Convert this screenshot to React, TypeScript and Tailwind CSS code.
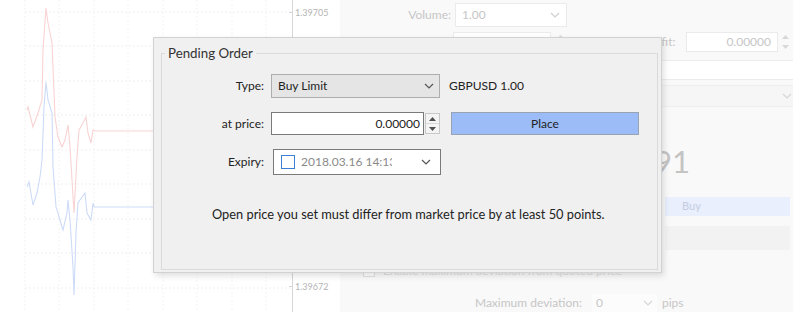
import React from "react";

const FONT = { fontFamily: "Lato, 'Liberation Sans', sans-serif" };

const RED = "27,110 28,107 33,127 38,113 42,100 43,50 46,8 48,23 52,43 55,117 58,137 62,147 65,140 68,125 70,147 74,213 77,157 79,130 83,123 86,117 88,133 91,143 93,130 95,131 292,131";
const BLUE = "27,187 29,182 33,205 37,193 40,177 42,160 44,107 46,82 48,100 52,113 53,167 56,207 58,213 62,227 63,230 67,213 68,200 70,220 73,267 74,295 76,233 78,203 82,197 85,193 87,213 91,220 93,203 94,207 292,207";

const H_LINES = [12, 46, 81, 115, 150, 184, 219, 253, 288];
const V_LINES = [25, 59, 94, 128, 163, 197, 232, 266];

function Chevron({ className = "" }: { className?: string }) {
  return (
    <svg width="10" height="6" viewBox="0 0 10 6" className={className}>
      <polyline points="1,1 5,5 9,1" fill="none" stroke="currentColor" strokeWidth="1.2" />
    </svg>
  );
}

function Spinner({ faint = false }: { faint?: boolean }) {
  const c = faint ? "#d8d8d8" : "#505050";
  return (
    <div className={`flex flex-col w-[15px] h-full ${faint ? "" : "border border-[#c8c8c8] bg-[#f4f4f4]"}`}>
      <div className="flex-1 flex items-center justify-center">
        <svg width="7" height="4" viewBox="0 0 7 4"><polygon points="0,4 3.5,0 7,4" fill={c} /></svg>
      </div>
      <div className={`flex-1 flex items-center justify-center ${faint ? "" : "border-t border-[#d8d8d8]"}`}>
        <svg width="7" height="4" viewBox="0 0 7 4"><polygon points="0,0 3.5,4 7,0" fill={c} /></svg>
      </div>
    </div>
  );
}

function Chart() {
  return (
    <svg width="292" height="312" className="shrink-0">
      {H_LINES.map((y) => (
        <line key={"h" + y} x1="25" x2="292" y1={y} y2={y} stroke="#efefef" strokeDasharray="2 2" />
      ))}
      {V_LINES.map((x) => (
        <line key={"v" + x} x1={x} x2={x} y1="0" y2="312" stroke="#f3f3f3" strokeDasharray="2 2" />
      ))}
      <polyline points={RED} fill="none" stroke="#f9d3d3" strokeWidth="1.1" />
      <polyline points={BLUE} fill="none" stroke="#cddbf8" strokeWidth="1.1" />
    </svg>
  );
}

function PriceAxis() {
  return (
    <div className="w-[48px] shrink-0 border-l border-[#d6d6d6] flex flex-col justify-between pt-[6px] pb-[19px] text-[9px] text-[#b4b4b4]">
      <div className="flex items-center gap-[2px] -ml-[4px]">
        <span className="w-[4px] border-t border-[#d6d6d6]" />
        <span>1.39705</span>
      </div>
      <div className="flex items-center gap-[2px] -ml-[4px]">
        <span className="w-[4px] border-t border-[#d6d6d6]" />
        <span>1.39672</span>
      </div>
    </div>
  );
}

function OrderPanel() {
  const label = "text-[12px] text-[#c6c6c6]";
  const box = "bg-white border border-[#ebebeb]";
  return (
    <div className="w-[453px] shrink-0 bg-[#f9f9f9] flex flex-col text-[#c6c6c6]">
      {/* volume */}
      <div className="flex items-center h-[24px] mt-[3px]">
        <span className={`${label} w-[111px] text-right`}>Volume:</span>
        <div className={`${box} ml-[4px] w-[112px] h-full flex items-center justify-between pl-[6px] pr-[6px] text-[12px]`}>
          <span>1.00</span>
          <Chevron className="text-[#cfcfcf]" />
        </div>
      </div>
      {/* stop loss / take profit */}
      <div className="flex items-center h-[21px] mt-[5px]">
        <span className={`${label} w-[111px] text-right`}>Stop Loss:</span>
        <div className={`${box} ml-[4px] w-[100px] h-full flex items-center justify-end pr-[4px] text-[12px]`}>0.00000</div>
        <div className="ml-[2px] h-full"><Spinner faint /></div>
        <span className={`${label} w-[109px] text-right`}>Take Profit:</span>
        <div className={`${box} ml-[11px] w-[93px] h-full flex items-center justify-end pr-[6px] text-[12px]`}>0.00000</div>
        <div className="h-full"><Spinner faint /></div>
      </div>
      {/* comment */}
      <div className="flex h-[20px] mt-[8px]">
        <span className="w-[115px]" />
        <div className="flex-1 bg-white border-y border-[#ececec]" />
      </div>
      {/* fill policy */}
      <div className="flex h-[23px] mt-[5px]">
        <span className="w-[115px]" />
        <div className="flex-1 bg-[#f6f6f6] border-y border-[#efefef] flex items-center justify-end pr-[1px]">
          <Chevron className="text-[#d6d6d6]" />
        </div>
      </div>
      {/* prices */}
      <div className="flex justify-end pr-[103px] mt-[38px] h-[32px] items-center">
        <span className="text-[31px] leading-none text-[#c4c4c4]">1.39683 / 1.39691</span>
      </div>
      {/* sell / buy */}
      <div className="flex h-[20px] mt-[20px] gap-[10px] pl-[115px] pr-[3px]">
        <div className="flex-1 bg-[#fbe9e9]" />
        <div className="w-[125px] bg-[#e9effc] flex items-center pl-[17px] text-[11px] text-[#c4cde2]">Buy</div>
      </div>
      <div className="flex h-[24px] mt-[10px] pl-[325px] pr-[3px]">
        <div className="flex-1 bg-[#f2f2f2]" />
      </div>
      {/* deviation checkbox */}
      <div className="flex items-center h-[14px] mt-[14px] pl-[23px] gap-[8px]">
        <span className="w-[12px] h-[12px] border border-[#e2e2e2] bg-white" />
        <span className="text-[12px] text-[#e0e0e0]">Enable maximum deviation from quoted price</span>
      </div>
      {/* maximum deviation */}
      <div className="flex items-center h-[18px] mt-[16px]">
        <span className={`${label} w-[242px] text-right`}>Maximum deviation:</span>
        <div className="ml-[10px] w-[65px] h-full flex items-center justify-between pl-[4px] pr-[4px] bg-[#fcfcfc] text-[12px]">
          <span>0</span>
          <Chevron className="text-[#d6d6d6]" />
        </div>
        <span className={`${label} ml-[5px]`}>pips</span>
      </div>
    </div>
  );
}

function PendingOrderDialog() {
  return (
    <div className="absolute left-[153px] top-[37px] w-[509px] h-[236px] bg-[#f0f0f0] border border-[#d2d2d2] shadow-[2px_3px_6px_rgba(0,0,0,0.12)] pl-[7px] pr-[3px] pt-[8px] pb-[2px] text-[12px] text-[#222]">
      <fieldset className="h-full border border-[#dadada] px-0">
        <legend className="ml-[3px] px-[3px] text-[13.3px] text-[#333] leading-[15px]">Pending Order</legend>
        <div className="flex flex-col mt-[13px]">
          {/* Type */}
          <div className="flex items-center h-[24px]">
            <span className="w-[103px] text-right pr-[1px]">Type:</span>
            <div className="ml-[6px] w-[169px] h-full bg-[#e5e5e5] border border-[#adadad] flex items-center justify-between pl-[6px] pr-[5px]">
              <span>Buy Limit</span>
              <Chevron className="text-[#555]" />
            </div>
            <span className="ml-[9px]">GBPUSD 1.00</span>
          </div>
          {/* at price */}
          <div className="flex items-center h-[23px] mt-[14px]">
            <span className="w-[103px] text-right pr-[1px]">at price:</span>
            <div className="ml-[6px] w-[169px] h-full flex">
              <div className="flex-1 bg-white border border-[#7a7a7a] flex items-center justify-end pr-[3px]">0.00000</div>
              <div className="h-full py-[1px] pl-[1px]"><Spinner /></div>
            </div>
            <button className="ml-[11px] w-[188px] h-full bg-[#9bbcf7] border border-[#9aa3b4] text-[#222] flex items-center justify-center">
              Place
            </button>
          </div>
          {/* Expiry */}
          <div className="flex items-center h-[26px] mt-[14px]">
            <span className="w-[103px] text-right pr-[1px]">Expiry:</span>
            <div className="ml-[8px] w-[168px] h-full bg-white border border-[#7a7a7a] flex items-center pl-[7px] pr-[9px]">
              <span className="w-[14px] h-[14px] border-[1.5px] border-[#3c7fd4] shrink-0" />
              <span className="ml-[6px] w-[91px] overflow-hidden whitespace-nowrap text-[#8a8a8a]">2018.03.16 14:13</span>
              <Chevron className="ml-auto text-[#555]" />
            </div>
          </div>
          {/* message */}
          <div className="mt-[30px] pl-[50px] text-[12.8px] text-[#222]">
            Open price you set must differ from market price by at least 50 points.
          </div>
        </div>
      </fieldset>
    </div>
  );
}

export default function App() {
  return (
    <div className="relative w-[800px] h-[331px] bg-white overflow-hidden" style={FONT}>
      <div className="flex h-[312px]">
        <Chart />
        <PriceAxis />
        <OrderPanel />
      </div>
      <PendingOrderDialog />
    </div>
  );
}
